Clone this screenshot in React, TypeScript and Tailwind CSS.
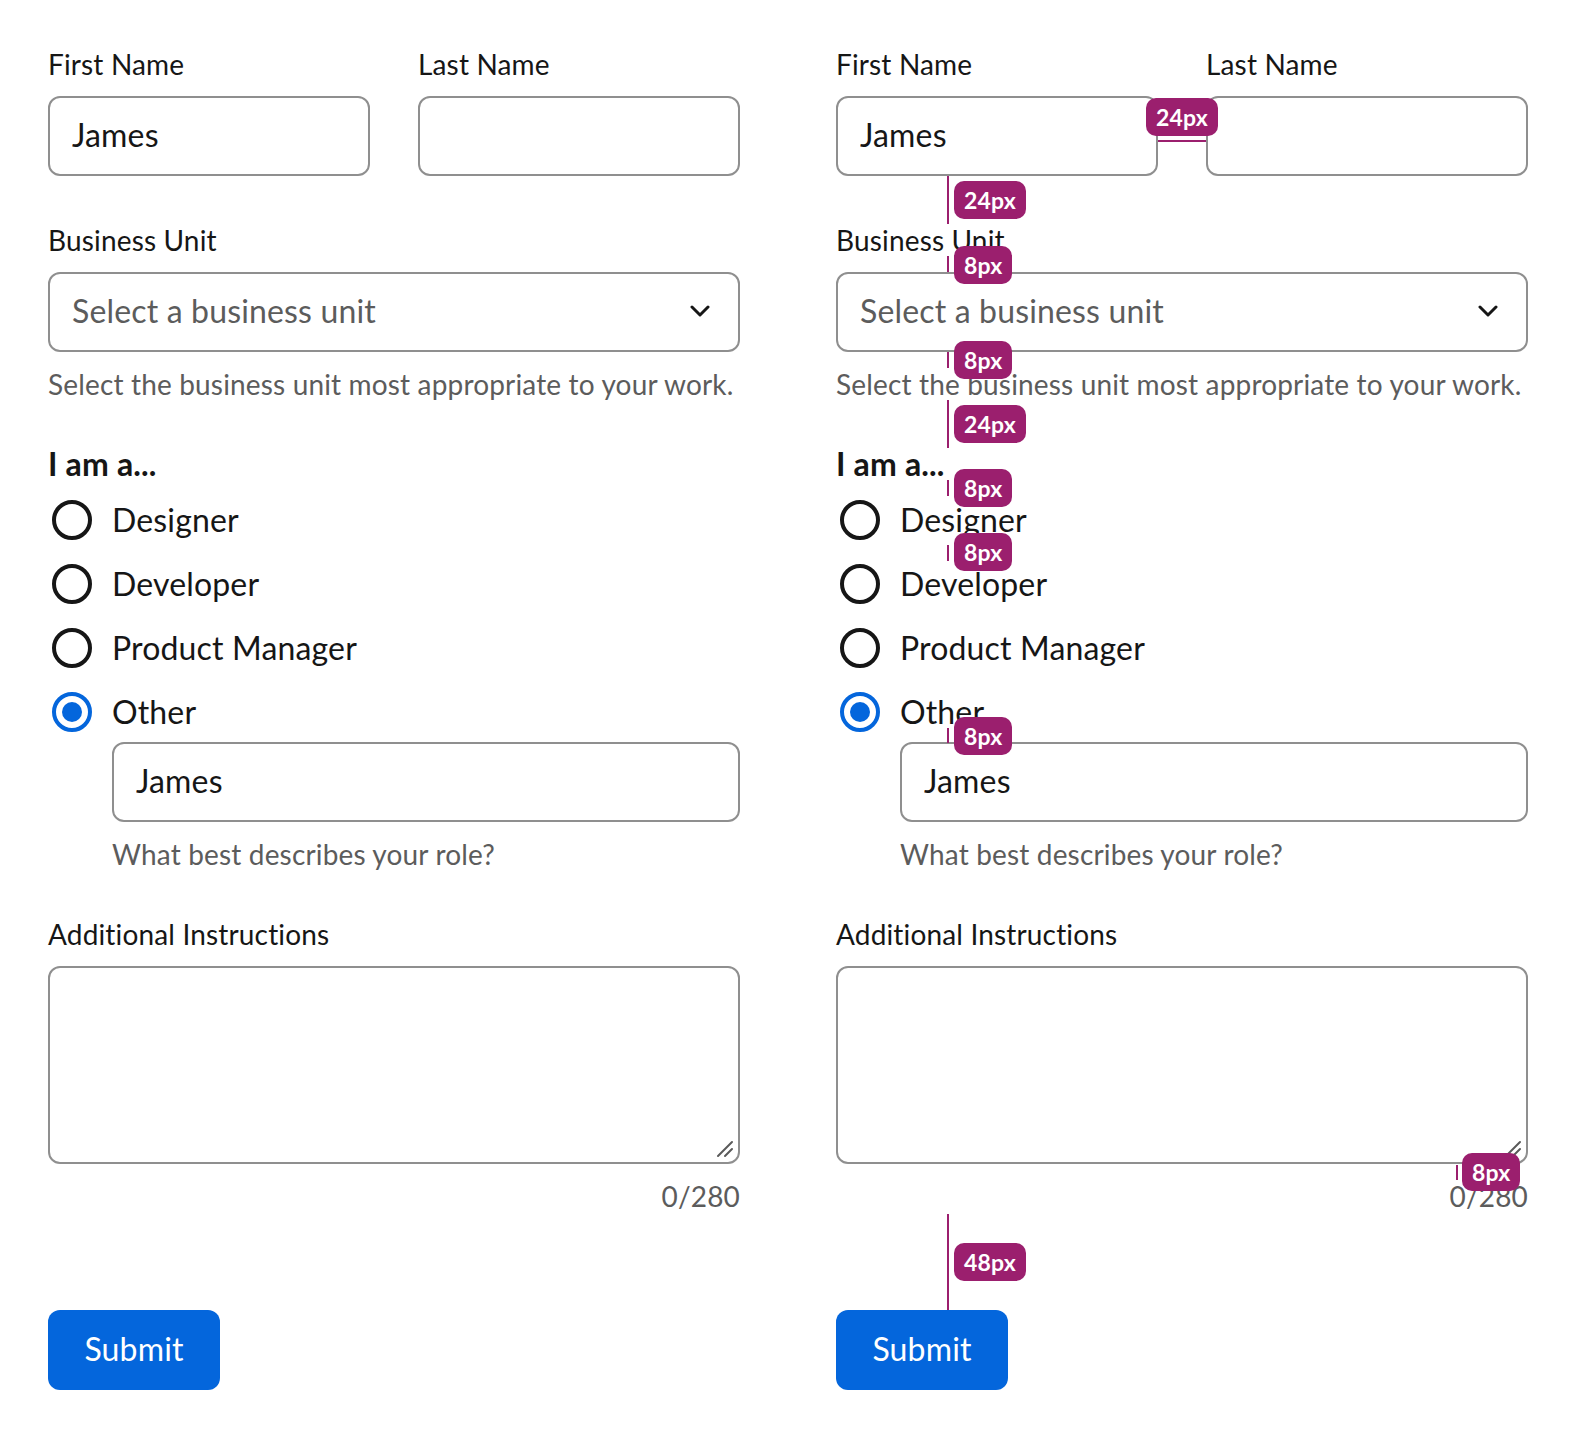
import React from "react";

const roles = ["Designer", "Developer", "Product Manager", "Other"];

const Badge = ({ label, className }: { label: string; className: string }) => (
  <div
    className={`absolute h-[38px] px-[10px] flex items-center rounded-[10px] bg-[#9b1f6e] text-white text-[23px] font-bold leading-none ${className}`}
  >
    {label}
  </div>
);

const VLine = ({ className }: { className: string }) => (
  <div className={`absolute w-[2px] bg-[#9b1f6e] ${className}`} />
);

const Radio = ({ checked }: { checked?: boolean }) => (
  <span className="w-[48px] h-[48px] flex items-center justify-center shrink-0">
    {checked ? (
      <span className="w-[40px] h-[40px] rounded-full border-[4px] border-[#0466dc] flex items-center justify-center">
        <span className="w-[20px] h-[20px] rounded-full bg-[#0466dc]" />
      </span>
    ) : (
      <span className="w-[40px] h-[40px] rounded-full border-[4px] border-[#161616]" />
    )}
  </span>
);

const inputCls =
  "w-full h-[80px] rounded-[12px] border-2 border-[#8f8f8f] bg-white px-[22px] pb-[3px] text-[32px] text-[#161616] outline-none";

const labelCls = "block text-[28px] leading-[32px] text-[#161616]";
const helpCls = "text-[28px] leading-[32px] text-[#5c5c5c]";

function Form({ annotated }: { annotated?: boolean }) {
  return (
    <div className="relative w-[692px] flex flex-col">
      <div className="flex gap-[48px]">
        <div className="flex-1 flex flex-col gap-[16px]">
          <label className={labelCls}>First Name</label>
          <input className={inputCls} defaultValue="James" />
        </div>
        <div className="flex-1 flex flex-col gap-[16px]">
          <label className={labelCls}>Last Name</label>
          <input className={inputCls} />
        </div>
      </div>

      <div className="mt-[48px] flex flex-col gap-[16px]">
        <label className={labelCls}>Business Unit</label>
        <button
          type="button"
          className="w-full h-[80px] rounded-[12px] border-2 border-[#8f8f8f] bg-white pl-[22px] pr-[28px] pb-[2px] flex items-center justify-between text-[32px] text-[#5c5c5c]"
        >
          <span>Select a business unit</span>
          <svg width="20" height="12" viewBox="0 0 20 12" fill="none">
            <path d="M2 2l8 8 8-8" stroke="#161616" strokeWidth="3" strokeLinecap="round" strokeLinejoin="round" />
          </svg>
        </button>
      </div>
      <p className={`mt-[16px] ${helpCls}`}>Select the business unit most appropriate to your work.</p>

      <p className="mt-[48px] text-[32px] leading-[32px] font-bold text-[#161616]">I am a...</p>
      <div className="mt-[16px] flex flex-col gap-[16px]">
        {roles.map((r) => (
          <div key={r} className="h-[48px] flex items-center gap-[16px]">
            <Radio checked={r === "Other"} />
            <span className="text-[32px] leading-[48px] text-[#161616]">{r}</span>
          </div>
        ))}
      </div>
      <div className="pl-[64px] mt-[6px] flex flex-col">
        <input className={inputCls} defaultValue="James" />
        <p className={`mt-[16px] ${helpCls}`}>What best describes your role?</p>
      </div>

      <div className="mt-[48px] flex flex-col gap-[16px]">
        <label className={labelCls}>Additional Instructions</label>
        <div className="relative">
          <textarea className="block w-full h-[198px] rounded-[12px] border-2 border-[#8f8f8f] bg-white resize-none outline-none p-[22px] text-[32px]" />
          <svg className="absolute right-[6px] bottom-[6px]" width="18" height="18" viewBox="0 0 18 18" fill="none">
            <path d="M2 16L16 2M9 16l7-7" stroke="#5a5a5a" strokeWidth="2" strokeLinecap="round" />
          </svg>
        </div>
      </div>
      <p className={`mt-[16px] text-right ${helpCls}`}>0/280</p>

      <div className="mt-[98px]">
        <button
          type="button"
          className="w-[172px] h-[80px] rounded-[12px] bg-[#0466dc] text-white text-[32px] pb-[3px]"
        >
          Submit
        </button>
      </div>

      {annotated && (
        <>
          <div className="absolute left-[322px] top-[92px] w-[48px] h-[2px] bg-[#9b1f6e]" />
          <Badge label="24px" className="left-[310px] top-[50px]" />

          <VLine className="left-[111px] top-[128px] h-[48px]" />
          <Badge label="24px" className="left-[118px] top-[133px]" />

          <VLine className="left-[111px] top-[208px] h-[16px]" />
          <Badge label="8px" className="left-[118px] top-[198px]" />

          <VLine className="left-[111px] top-[304px] h-[16px]" />
          <Badge label="8px" className="left-[118px] top-[293px]" />

          <VLine className="left-[111px] top-[352px] h-[48px]" />
          <Badge label="24px" className="left-[118px] top-[357px]" />

          <VLine className="left-[111px] top-[432px] h-[16px]" />
          <Badge label="8px" className="left-[118px] top-[421px]" />

          <VLine className="left-[111px] top-[497px] h-[16px]" />
          <Badge label="8px" className="left-[118px] top-[485px]" />

          <VLine className="left-[111px] top-[680px] h-[15px]" />
          <Badge label="8px" className="left-[118px] top-[669px]" />

          <VLine className="left-[620px] top-[1117px] h-[15px]" />
          <Badge label="8px" className="left-[626px] top-[1105px]" />

          <VLine className="left-[111px] top-[1166px] h-[96px]" />
          <Badge label="48px" className="left-[118px] top-[1195px]" />
        </>
      )}
    </div>
  );
}

export default function App() {
  return (
    <div className="min-h-[1438px] bg-white flex gap-[96px] px-[48px] pt-[48px] pb-[48px] tracking-[0.01em] font-['Lato','Noto_Sans',sans-serif]">
      <Form />
      <Form annotated />
    </div>
  );
}
